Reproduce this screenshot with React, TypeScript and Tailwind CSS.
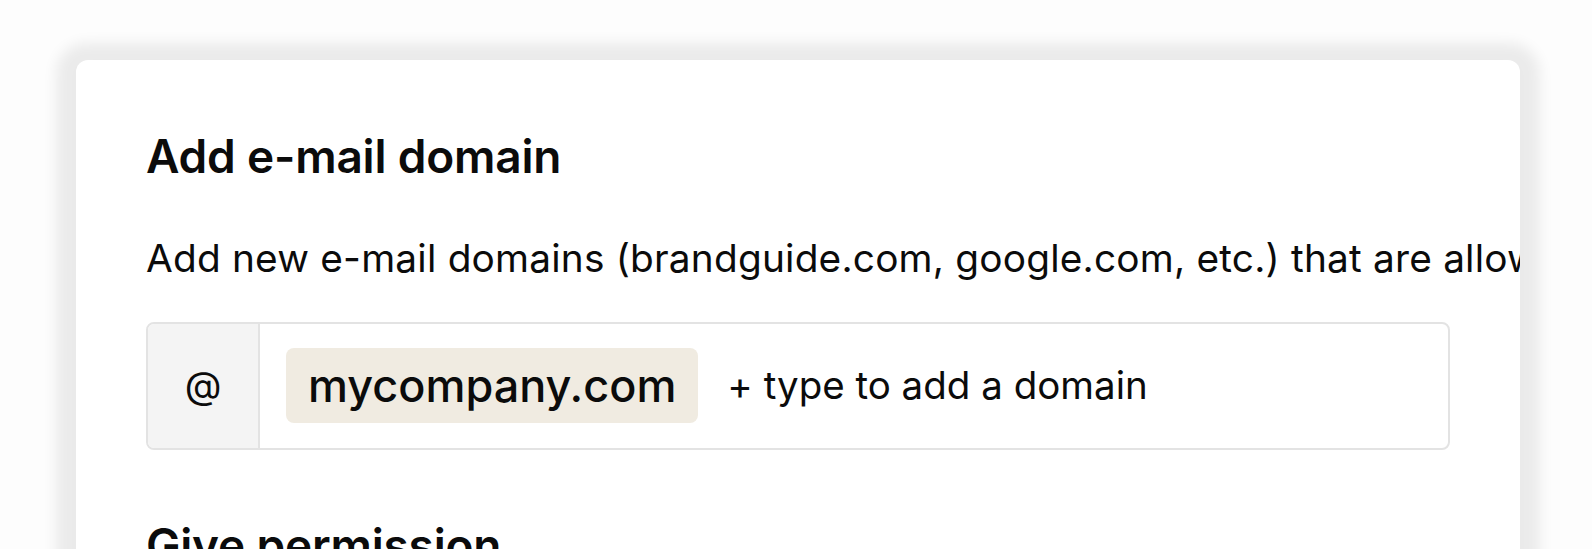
export default function App() {
  return (
    <div className="h-screen w-full overflow-hidden bg-[#fdfdfd] pl-[76px] pr-[72px] pt-[60px] font-['Inter',sans-serif] text-[#0b0b0b]">
      {/* Card */}
      <div className="overflow-hidden rounded-[12px] bg-white px-[70px] pb-[80px] pt-[69px] shadow-[0_3px_14px_20px_rgba(0,0,0,0.075)]">
        <h2 className="text-[46px] font-semibold leading-[1.21] tracking-[-0.2px]">
          Add e-mail domain
        </h2>

        <p className="mt-[50px] whitespace-nowrap text-[38.8px] leading-[1.21] tracking-[0.2px]">
          Add new e-mail domains (brandguide.com, google.com, etc.) that are allowed to join your workspace
        </p>

        {/* Domain input */}
        <div className="mt-[40px] flex h-[128px] overflow-hidden rounded-[8px] border-2 border-[#e3e3e3]">
          <div className="flex w-[112px] shrink-0 items-center justify-center border-r-2 border-[#e3e3e3] bg-[#f4f4f4] text-[38px]">
            @
          </div>
          <div className="flex flex-1 items-center pl-[26px]">
            <span className="flex h-[75px] items-center rounded-[8px] bg-[#f0ebe1] px-[22px] text-[45px] font-medium leading-none">
              mycompany.com
            </span>
            <span className="ml-[29px] text-[38.5px] leading-none">
              + type to add a domain
            </span>
          </div>
        </div>

        <h2 className="mt-[68px] text-[46px] font-semibold leading-[1.21] tracking-[-0.2px]">
          Give permission
        </h2>
      </div>
    </div>
  );
}
